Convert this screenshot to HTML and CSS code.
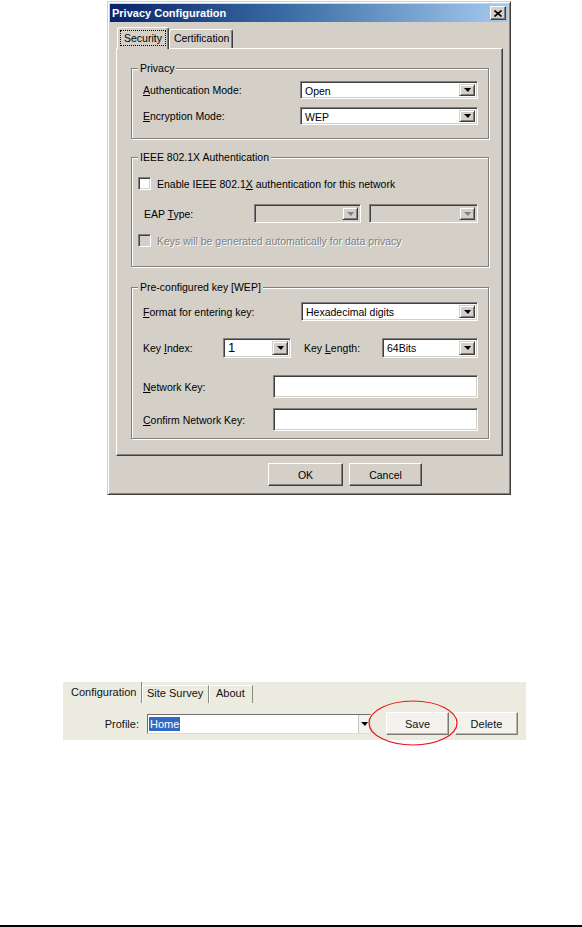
FILE: index.html
```html
<!DOCTYPE html>
<html lang="en">
<head>
    <meta charset="UTF-8">
    <meta name="viewport" content="width=device-width, initial-scale=1.0">
    <title>Privacy Configuration</title>
    <link rel="stylesheet" href="styles.css">
</head>
<body>

    <div class="dialog">
        <div class="titlebar">
            <span class="title">Privacy Configuration</span>
            <span class="close">
                <svg width="8" height="7" viewBox="0 0 8 7"><path d="M0.5 0.5 L7.5 6.5 M7.5 0.5 L0.5 6.5" stroke="#000" stroke-width="1.6" fill="none"/></svg>
            </span>
        </div>

        <div class="dialog-body">
            <div class="tabs">
                <div class="tab active"><span class="focus">Security</span></div>
                <div class="tab">Certification</div>
            </div>

            <div class="panel">

                <div class="group group-privacy">
                    <div class="group-title">Privacy</div>
                    <div class="row row-a">
                        <span class="label"><u>A</u>uthentication Mode:</span>
                        <div class="combo w178"><span class="value">Open</span><span class="drop"></span></div>
                    </div>
                    <div class="row row-b">
                        <span class="label"><u>E</u>ncryption Mode:</span>
                        <div class="combo w178"><span class="value">WEP</span><span class="drop"></span></div>
                    </div>
                </div>

                <div class="group group-ieee">
                    <div class="group-title">IEEE 802.1X Authentication</div>
                    <div class="row check-row row-c">
                        <span class="check"></span>
                        <span>Enable IEEE 802.1<u>X</u> authentication for this network</span>
                    </div>
                    <div class="row row-eap">
                        <span class="label">EAP <u>T</u>ype:</span>
                        <div class="combo disabled w107"><span class="value"></span><span class="drop"></span></div>
                        <div class="combo disabled w109"><span class="value"></span><span class="drop"></span></div>
                    </div>
                    <div class="row check-row row-keys">
                        <span class="check disabled"></span>
                        <span class="grey">Keys will be <u>g</u>enerated automatically for data privacy</span>
                    </div>
                </div>

                <div class="group group-key">
                    <div class="group-title">Pre-configured key [WEP]</div>
                    <div class="row row-format">
                        <span class="label"><u>F</u>ormat for entering key:</span>
                        <div class="combo w177"><span class="value">Hexadecimal digits</span><span class="drop"></span></div>
                    </div>
                    <div class="row row-index">
                        <span class="label label-index">Key <u>I</u>ndex:</span>
                        <div class="combo w68"><span class="value big">1</span><span class="drop"></span></div>
                        <span class="label-length">Key <u>L</u>ength:</span>
                        <div class="combo w96"><span class="value">64Bits</span><span class="drop"></span></div>
                    </div>
                    <div class="row row-net">
                        <span class="label"><u>N</u>etwork Key:</span>
                        <div class="textbox"></div>
                    </div>
                    <div class="row row-confirm">
                        <span class="label"><u>C</u>onfirm Network Key:</span>
                        <div class="textbox"></div>
                    </div>
                </div>

            </div>

            <div class="buttons">
                <div class="btn btn-ok">OK</div>
                <div class="btn btn-cancel">Cancel</div>
            </div>
        </div>
    </div>

    <div class="shot">
        <div class="shot-tabs">
            <div class="stab stab-config">Configuration</div>
            <div class="stab stab-survey">Site Survey</div>
            <div class="stab stab-about">About</div>
        </div>
        <div class="shot-row">
            <span class="prof-label">Profile:</span>
            <div class="xp-combo">
                <span class="sel">Home</span>
                <span class="xp-drop"></span>
            </div>
            <div class="xp-btn btn-save">Save</div>
            <div class="xp-btn btn-delete">Delete</div>
        </div>
        <svg class="mark" width="90" height="46" viewBox="0 0 90 46">
            <ellipse cx="45" cy="23" rx="44" ry="22" fill="none" stroke="#e8141b" stroke-width="1.2"/>
        </svg>
    </div>

    <div class="rule"></div>

</body>
</html>
```

FILE: styles.css
```css
*{
    box-sizing: border-box;
}

body{
    margin: 0;
    background-color: #fff;
    font-family: "Liberation Sans", Arial, sans-serif;
    font-size: 11px;
    color: #000;
}

/* dialog window */

.dialog{
    width: 404px;
    height: 494px;
    margin: 1px 0 0 107px;
    padding: 2px;
    font-size: 10.5px;
    background-color: #d4d0c8;
    border: 1px solid;
    border-color: #d4d0c8 #404040 #404040 #d4d0c8;
    box-shadow: inset 1px 1px #fff, inset -1px -1px #808080;
}

.titlebar{
    height: 18px;
    display: flex;
    align-items: center;
    justify-content: space-between;
    padding: 0 2px 0 2px;
    background: linear-gradient(to right, #0a246a, #3a6ea5 45%, #a6caf0);
    color: #fff;
    font-size: 11px;
    font-weight: bold;
}

.close{
    width: 16px;
    height: 14px;
    display: flex;
    align-items: center;
    justify-content: center;
    background-color: #d4d0c8;
    border: 1px solid;
    border-color: #fff #404040 #404040 #fff;
    box-shadow: inset -1px -1px #808080;
}

.dialog-body{
    padding: 5px 5px 0 6px;
}

.tabs{
    height: 21px;
    display: flex;
    align-items: flex-end;
    padding-left: 1px;
}

.tab{
    height: 19px;
    padding: 0 3px 0 4px;
    line-height: 17px;
    border: 1px solid;
    border-bottom: none;
    border-color: #fff #404040 transparent #fff;
    border-radius: 3px 3px 0 0;
    box-shadow: inset -1px 0 #808080;
}

.tab.active{
    height: 22px;
    margin-bottom: -1px;
    padding: 2px 2px 0 2px;
    position: relative;
    z-index: 1;
    background-color: #d4d0c8;
}

.focus{
    display: inline-block;
    padding: 0 3px;
    line-height: 14px;
    border: 1px dotted #000;
}

.panel{
    height: 408px;
    padding: 19px 0 0 14px;
    border: 1px solid;
    border-color: #fff #404040 #404040 #fff;
    box-shadow: inset -1px -1px #808080;
}

/* group boxes */

.group{
    width: 358px;
    padding: 0 10px 0 11px;
    border: 1px solid #808080;
    box-shadow: inset 1px 1px #fff, 1px 1px #fff;
}

.group-title{
    width: fit-content;
    height: 13px;
    line-height: 13px;
    margin: -7px 0 0 -5px;
    padding: 0 2px;
    background-color: #d4d0c8;
}

.group-privacy{ height: 71px; }
.group-ieee{ height: 110px; margin-top: 18px; }
.group-key{ height: 152px; margin-top: 20px; }

.row{
    display: flex;
    align-items: center;
}

.label{
    flex: 1;
}

.row-a{ height: 18px; margin-top: 6px; }
.row-b{ height: 18px; margin-top: 8px; }

.row-c{ height: 13px; margin-top: 13px; }
.row-eap{ height: 19px; margin-top: 14px; gap: 8px; padding-left: 1px; }
.row-keys{ height: 13px; margin-top: 11px; }

.row-format{ height: 19px; margin-top: 8px; }
.row-index{ height: 20px; margin-top: 17px; }
.row-net{ height: 23px; margin-top: 17px; }
.row-confirm{ height: 23px; margin-top: 10px; }

.check-row{
    margin-left: -5px;
}

.label-index{
    flex: none;
    width: 80px;
}

.label-length{
    width: 78px;
    margin-left: 13px;
}

.grey{
    color: #808080;
    text-shadow: 1px 1px #fff;
}

/* sunken controls */

.combo, .textbox, .check{
    background-color: #fff;
    border: 1px solid;
    border-color: #808080 #fff #fff #808080;
    box-shadow: inset 1px 1px #404040, inset -1px -1px #d4d0c8;
}

.combo{
    height: 100%;
    display: flex;
    padding: 2px;
}

.combo .value{
    flex: 1;
    padding-left: 2px;
    line-height: 14px;
    white-space: nowrap;
}

.combo .value.big{
    font-size: 13px;
}

.combo.disabled{
    background-color: #d4d0c8;
}

.drop{
    width: 16px;
    height: 100%;
    display: flex;
    align-items: center;
    justify-content: center;
    background-color: #d4d0c8;
    border: 1px solid;
    border-color: #d4d0c8 #404040 #404040 #d4d0c8;
    box-shadow: inset 1px 1px #fff, inset -1px -1px #808080;
}

.drop::after{
    content: "";
    width: 0;
    height: 0;
    border-left: 4px solid transparent;
    border-right: 3px solid transparent;
    border-top: 4px solid #000;
}

.combo.disabled .drop::after{
    border-top-color: #808080;
}

.w178{ width: 178px; }
.w177{ width: 177px; }
.w107{ width: 107px; }
.w109{ width: 109px; }
.w68{ width: 68px; }
.w96{ width: 96px; }

.textbox{
    width: 205px;
    height: 100%;
}

.check{
    width: 13px;
    height: 13px;
    margin-right: 6px;
}

.check.disabled{
    background-color: #d4d0c8;
}

/* dialog buttons */

.buttons{
    display: flex;
    gap: 6px;
    margin-top: 7px;
    padding-left: 152px;
}

.btn{
    height: 23px;
    display: flex;
    align-items: center;
    justify-content: center;
    background-color: #d4d0c8;
    border: 1px solid;
    border-color: #fff #404040 #404040 #fff;
    box-shadow: inset -1px -1px #808080;
}

.btn-ok{ width: 75px; }
.btn-cancel{ width: 73px; }

/* second screenshot */

.shot{
    width: 463px;
    height: 58px;
    margin: 187px 0 0 63px;
    position: relative;
    background-color: #ecebe0;
}

.shot-tabs{
    height: 21px;
    display: flex;
    align-items: flex-end;
}

.stab{
    height: 21px;
    line-height: 20px;
    color: #111;
}

.stab-config{
    width: 79px;
    padding-left: 8px;
    border-right: 1px solid #8a8a80;
}

.stab-survey, .stab-about{
    height: 18px;
    line-height: 15px;
    border-left: 1px solid #fff;
    border-top: 1px solid #fff;
    border-right: 1px solid #8a8a80;
}

.stab-survey{
    width: 67px;
    padding-left: 4px;
}

.stab-about{
    width: 44px;
    padding-left: 6px;
}

.shot-row{
    height: 23px;
    margin-top: 9px;
    display: flex;
    align-items: center;
}

.prof-label{
    width: 76px;
    margin-right: 8px;
    text-align: right;
    color: #111;
}

.xp-combo{
    width: 224px;
    height: 20px;
    display: flex;
    align-items: center;
    padding-left: 1px;
    background-color: #fff;
    border: 1px solid;
    border-color: #6f6f6f #dcdcd4 #dcdcd4 #6f6f6f;
}

.sel{
    height: 14px;
    line-height: 14px;
    padding: 0 1px;
    background-color: #316ac5;
    color: #fff;
}

.xp-drop{
    width: 12px;
    height: 100%;
    margin-left: auto;
    display: flex;
    align-items: center;
    justify-content: center;
    border-left: 1px solid #c8c8c0;
    background-color: #f4f3ee;
}

.xp-drop::after{
    content: "";
    width: 0;
    height: 0;
    border-left: 4px solid transparent;
    border-right: 3px solid transparent;
    border-top: 4px solid #000;
}

.xp-btn{
    width: 63px;
    height: 23px;
    display: flex;
    align-items: center;
    justify-content: center;
    color: #111;
    background-color: #f3f2ec;
    border: 1px solid;
    border-color: #fff #7a7a72 #7a7a72 #fff;
    box-shadow: inset -1px -1px #b8b6aa;
}

.btn-save{ margin-left: 15px; }
.btn-delete{ margin-left: 6px; }

.mark{
    position: absolute;
    left: 305px;
    top: 18px;
}

.rule{
    height: 2px;
    margin-top: 185px;
    background-color: #000;
}
```
